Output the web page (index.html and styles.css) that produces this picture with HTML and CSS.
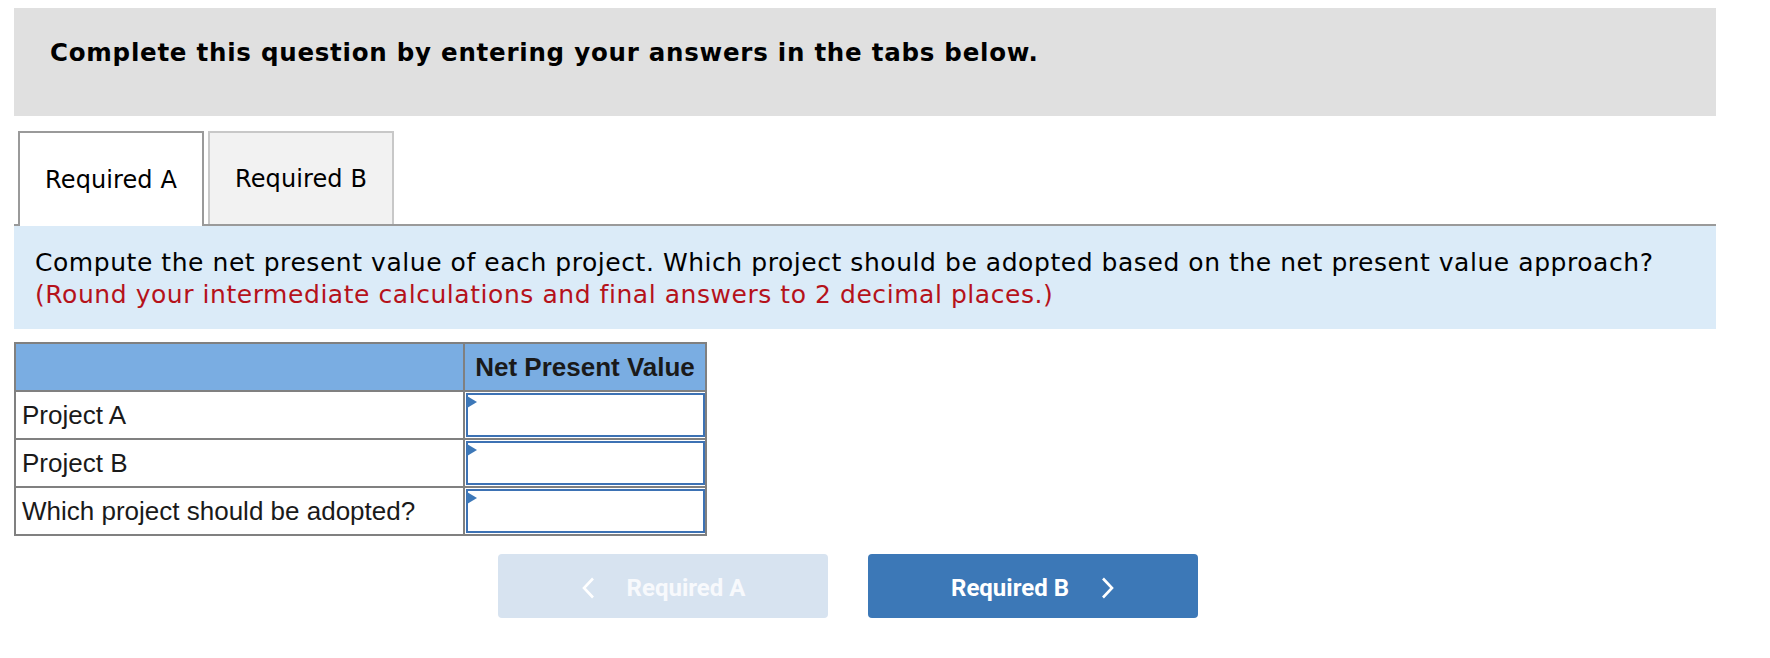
FILE: index.html
```html
<!DOCTYPE html>
<html lang="en">
<head>
<meta charset="utf-8">
<title>Required A</title>
<link rel="stylesheet" href="styles.css">
</head>
<body>
<div class="page">
  <div class="banner"><h1>Complete this question by entering your answers in the tabs below.</h1></div>
  <div class="tabs">
    <div class="tab active">Required A</div>
    <div class="tab">Required B</div>
  </div>
  <div class="prompt">
    <p>Compute the net present value of each project. Which project should be adopted based on the net present value approach?
    <span class="note">(Round your intermediate calculations and final answers to 2 decimal places.)</span></p>
  </div>
  <div class="grid">
    <div class="cell head"></div>
    <div class="cell head title">Net Present Value</div>
    <div class="cell label">Project A</div>
    <div class="cell entry"><div class="input"><span class="marker"></span></div></div>
    <div class="cell label">Project B</div>
    <div class="cell entry"><div class="input"><span class="marker"></span></div></div>
    <div class="cell label">Which project should be adopted?</div>
    <div class="cell entry"><div class="input"><span class="marker"></span></div></div>
  </div>
  <div class="nav">
    <div class="btn prev">
      <svg class="chev" width="14" height="22" viewBox="0 0 14 22"><polyline points="12,1.5 3,11 12,20.5" fill="none" stroke="#ffffff" stroke-width="2.6"/></svg>
      <span>Required A</span>
    </div>
    <div class="btn next">
      <span>Required B</span>
      <svg class="chev" width="14" height="22" viewBox="0 0 14 22"><polyline points="2,1.5 11,11 2,20.5" fill="none" stroke="#ffffff" stroke-width="2.6"/></svg>
    </div>
  </div>
</div>
</body>
</html>
```
FILE: styles.css
```css
html, body {
  margin: 0;
  padding: 0;
  background: #ffffff;
}
body {
  font-family: "DejaVu Sans", Verdana, sans-serif;
  color: #000000;
}
.page {
  margin: 8px 0 0 14px;
  width: 1702px;
}
.banner {
  background: #e0e0e0;
  height: 108px;
  box-sizing: border-box;
  padding: 30px 36px 0;
}
.banner h1 {
  margin: 0;
  font-size: 24.5px;
  letter-spacing: 0.75px;
  line-height: 30px;
  font-weight: bold;
}
.tabs {
  display: flex;
  align-items: flex-end;
  gap: 4px;
  margin-top: 15px;
  padding-left: 4px;
  border-bottom: 2px solid #9a9a9a;
}
.tab {
  width: 186px;
  height: 93px;
  box-sizing: border-box;
  border: 2px solid #c8c8c8;
  border-bottom: none;
  background: #f2f2f2;
  display: flex;
  align-items: center;
  justify-content: center;
  font-size: 24px;
  letter-spacing: 0.1px;
  color: #000000;
}
.tab.active {
  border-color: #9a9a9a;
  background: #ffffff;
  height: 95px;
  margin-bottom: -2px;
}
.prompt {
  background: #dbebf8;
  padding: 21px 21px 19px;
}
.prompt p {
  margin: 0;
  font-size: 25px;
  letter-spacing: 0.55px;
  line-height: 31.5px;
}
.note {
  display: block;
  color: #b5121b;
}
.grid {
  margin-top: 13px;
  display: grid;
  grid-template-columns: 447px 240px;
  grid-auto-rows: 46px;
  gap: 2px;
  padding: 2px;
  width: max-content;
  background: #808080;
  font-family: "Liberation Sans", Arial, Helvetica, sans-serif;
  font-size: 26px;
  color: #1a1a1a;
}
.cell {
  background: #ffffff;
  display: flex;
  align-items: center;
}
.cell.head {
  background: #7aade2;
}
.cell.title {
  justify-content: center;
  font-weight: bold;
}
.cell.label {
  padding-left: 6px;
}
.cell.entry {
  padding: 1px 0 1px 1px;
  align-items: stretch;
}
.input {
  flex: 1;
  position: relative;
  border: 2px solid #3d72b4;
  background: #ffffff;
}
.marker {
  position: absolute;
  left: -1px;
  top: 1px;
  width: 0;
  height: 0;
  border-left: 10px solid #3d78b8;
  border-top: 6px solid transparent;
  border-bottom: 6px solid transparent;
}
.nav {
  display: flex;
  gap: 40px;
  margin-top: 18px;
  padding-left: 484px;
}
.btn {
  width: 330px;
  height: 64px;
  box-sizing: border-box;
  padding-top: 3px;
  border-radius: 4px;
  display: flex;
  align-items: center;
  justify-content: center;
  gap: 32px;
  color: #ffffff;
  font-family: Roboto, "Liberation Sans", Arial, sans-serif;
  font-weight: bold;
  font-size: 24px;
}
.btn.prev {
  background: #d7e3f0;
  color: #f7f9fc;
}
.btn.next {
  background: #3c78b7;
}
.chev {
  display: block;
}
```
